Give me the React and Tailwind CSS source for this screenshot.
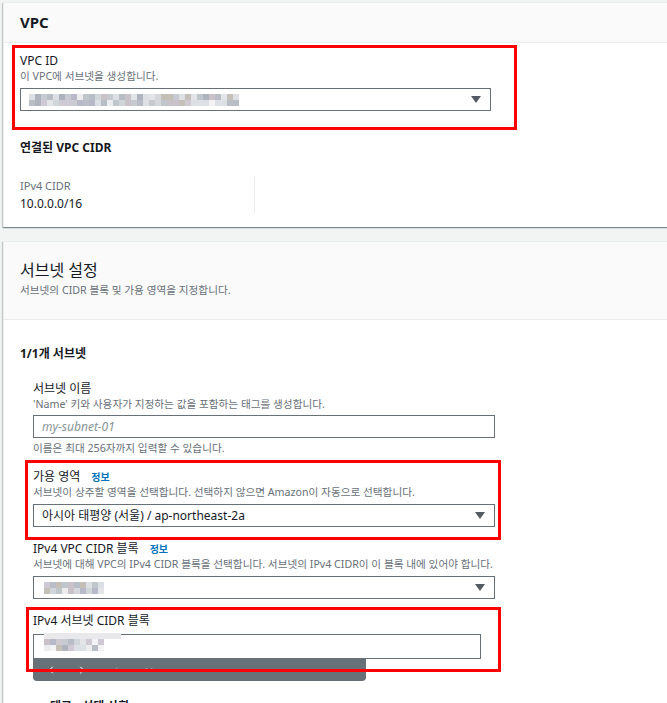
import { ChevronDown, ChevronLeft, ChevronRight, ChevronUp } from 'lucide-react'

const palette = [
  '#d5d7dc', '#c7cad1', '#e3e4e8', '#b9bdc6', '#cfc9d3', '#bfc6cc', '#dcdfe3',
  '#aeb3bd', '#ececef', '#c9c3c9', '#d0d6d9', '#f3f3f5', '#b7b9c9', '#c4c0b8',
]

function Mosaic({ cols, rows = 2, size = 6, seed = 1 }) {
  let s = seed
  const next = () => {
    s = (s * 9301 + 49297) % 233280
    return palette[Math.floor((s / 233280) * palette.length)]
  }
  return (
    <div className="flex flex-col">
      {Array.from({ length: rows }).map((_, r) => (
        <div key={r} className="flex">
          {Array.from({ length: cols }).map((_, c) => (
            <div key={c} style={{ width: size, height: size, backgroundColor: next() }} />
          ))}
        </div>
      ))}
    </div>
  )
}

function Caret() {
  return (
    <svg width="10" height="7" viewBox="0 0 10 7">
      <path d="M0 0h10L5 7z" fill="#545b64" />
    </svg>
  )
}

function Select({ width, children }) {
  return (
    <div
      className={`flex h-[23px] items-center justify-between border border-[#687078] bg-white pl-[8px] pr-[9px] ${width}`}
    >
      <div className="flex items-center">{children}</div>
      <Caret />
    </div>
  )
}

function RedBox({ className, children }) {
  return (
    <div className={`relative ${className}`}>
      {children}
      <div className="pointer-events-none absolute inset-0 z-20 border-[3px] border-[#ff0000]" />
    </div>
  )
}

function Label({ children, info }) {
  return (
    <div className="flex items-center text-[12px] leading-[16px] text-[#16191f]">
      {children}
      {info ? <span className="ml-[11px] text-[10px] font-bold text-[#0073bb]">정보</span> : null}
    </div>
  )
}

function Desc({ children }) {
  return <div className="text-[10.65px] leading-[14px] text-[#687078]">{children}</div>
}

const cardShadow =
  'shadow-[0_1px_1px_0_rgba(0,28,36,0.3),1px_1px_1px_0_rgba(0,28,36,0.15),-1px_1px_1px_0_rgba(0,28,36,0.15)]'

export default function App() {
  return (
    <div className="h-[703px] overflow-hidden bg-[#f2f3f3] pl-[3px] pt-[2px] font-['Noto_Sans','Noto_Sans_CJK_KR',sans-serif]">
      {/* VPC */}
      <div className={`w-[720px] border border-b-0 border-[#eaeded] bg-white ${cardShadow}`}>
        <div className="flex h-[40px] items-center border-b border-[#eaeded] bg-[#fafafa] px-[16px]">
          <span className="text-[15px] font-bold text-[#16191f]">VPC</span>
        </div>
        <div className="px-[16px] pb-[14px]">
          <RedBox className="-ml-[8px] mt-[2px] w-[505px] pb-[19px] pl-[8px] pt-[8px]">
            <Label>VPC ID</Label>
            <Desc>이 VPC에 서브넷을 생성합니다.</Desc>
            <div className="mt-[5px]">
              <Select width="w-[471px]">
                <Mosaic cols={35} rows={2} size={6} seed={7} />
              </Select>
            </div>
          </RedBox>
          <div className="mt-[10px] text-[12px] font-bold leading-[16px] text-[#16191f]">연결된 VPC CIDR</div>
          <div className="mt-[21px] flex">
            <div className="w-[235px] border-r border-[#eaeded]">
              <div className="text-[11px] leading-[18px] text-[#687078]">IPv4 CIDR</div>
              <div className="text-[12px] leading-[18px] text-[#16191f]">10.0.0.0/16</div>
            </div>
          </div>
        </div>
      </div>

      {/* 서브넷 설정 */}
      <div className={`mt-[14px] w-[720px] border border-b-0 border-[#eaeded] bg-white ${cardShadow}`}>
        <div className="border-b border-[#eaeded] bg-[#fafafa] px-[16px] pb-[21px] pt-[16px]">
          <div className="text-[16px] leading-[24px] text-[#16191f]">서브넷 설정</div>
          <div className="text-[10.65px] leading-[16px] text-[#687078]">서브넷의 CIDR 블록 및 가용 영역을 지정합니다.</div>
        </div>
        <div className="px-[16px] pt-[26px]">
          <div className="text-[12px] font-bold leading-[16px] text-[#16191f]">1/1개 서브넷</div>
          <div className="pl-[13px]">
            <div className="mt-[19px]">
              <Label>서브넷 이름</Label>
              <Desc>'Name' 키와 사용자가 지정하는 값을 포함하는 태그를 생성합니다.</Desc>
              <div className="mt-[4px] flex h-[23px] w-[462px] items-center border border-[#687078] pl-[8px] text-[12px] italic text-[#879596]">
                my-subnet-01
              </div>
              <div className="mt-[3px]">
                <Desc>이름은 최대 256자까지 입력할 수 있습니다.</Desc>
              </div>
            </div>

            <RedBox className="-ml-[8px] mt-[5px] w-[476px] pb-[13px] pl-[8px] pt-[9px]">
              <Label info>가용 영역</Label>
              <Desc>서브넷이 상주할 영역을 선택합니다. 선택하지 않으면 Amazon이 자동으로 선택합니다.</Desc>
              <div className="mt-[5px]">
                <Select width="w-[462px]">
                  <span className="text-[12px] text-[#16191f]">아시아 태평양 (서울) / ap-northeast-2a</span>
                </Select>
              </div>
            </RedBox>

            <div className="mt-[1px]">
              <Label info>IPv4 VPC CIDR 블록</Label>
              <Desc>서브넷에 대해 VPC의 IPv4 CIDR 블록을 선택합니다. 서브넷의 IPv4 CIDR이 이 블록 내에 있어야 합니다.</Desc>
              <div className="mt-[5px]">
                <Select width="w-[462px]">
                  <div className="ml-[2px]">
                    <Mosaic cols={10} rows={2} size={6} seed={3} />
                  </div>
                </Select>
              </div>
            </div>

            <RedBox className="-ml-[7px] mt-[8px] w-[475px] pb-[13px] pl-[7px] pt-[6px]">
              <Label>IPv4 서브넷 CIDR 블록</Label>
              <div className="relative mt-[5px]">
                <div className="flex h-[25px] w-[448px] flex-col border border-[#687078] bg-white pl-[10px]">
                  <div className="-mt-[2px] h-[6px] w-[77px] bg-[#e9e9ec]" />
                  <Mosaic cols={10} rows={2} size={6} seed={11} />
                </div>
                <div className="absolute left-0 top-full z-10 flex h-[22px] w-[333px] items-center rounded-b-[4px] bg-[#687078] pl-[12px] text-white">
                  <ChevronLeft size={12} strokeWidth={2} />
                  <ChevronRight size={12} strokeWidth={2} className="ml-[19px]" />
                  <ChevronUp size={10} strokeWidth={2} className="ml-[24px]" />
                  <ChevronDown size={10} strokeWidth={2} className="ml-[22px]" />
                </div>
              </div>
            </RedBox>

            <div className="ml-[17px] mt-[27px] text-[12px] font-bold leading-[16px] text-[#16191f]">태그 - 선택 사항</div>
          </div>
        </div>
      </div>
    </div>
  )
}
